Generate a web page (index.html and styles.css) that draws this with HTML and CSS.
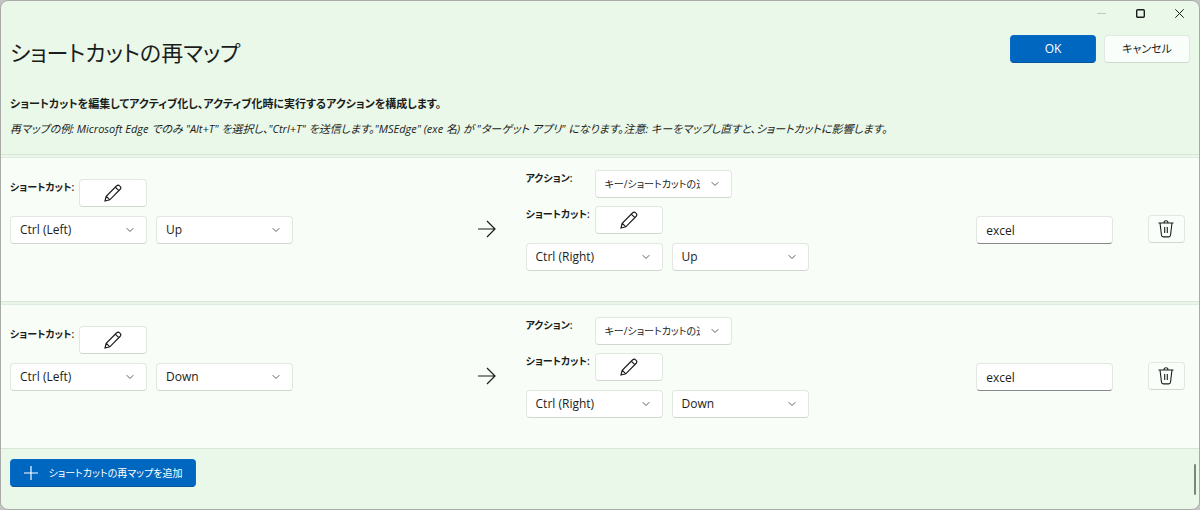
FILE: index.html
```html
<!DOCTYPE html>
<html lang="ja">
<head>
<meta charset="utf-8">
<title>ショートカットの再マップ</title>
<link rel="stylesheet" href="styles.css">
</head>
<body>
<svg class="defs" aria-hidden="true">
  <symbol id="chevron" viewBox="0 0 8 8"><path d="M0.7 2.2 4 5.5 7.3 2.2"/></symbol>
  <symbol id="pencil" viewBox="0 0 18 18"><path d="M1 17 2.2 12.2 12.7 1.8a2 2 0 0 1 2.9 0l.6.6a2 2 0 0 1 0 2.9L5.8 15.8zM11.3 3.2l3.5 3.5M2.2 12.2l3.6 3.6"/></symbol>
  <symbol id="arrow" viewBox="0 0 18 18"><path d="M0 9h17M9 1l8 8-8 8"/></symbol>
  <symbol id="trash" viewBox="0 0 16 18"><path d="M.5 3h15M2 3l1.5 12.3a1.8 1.8 0 0 0 1.8 1.6h5.4a1.8 1.8 0 0 0 1.8-1.6L14 3M6 2.8a2 2 0 0 1 4 0M6.7 7v6M9.3 7v6"/></symbol>
</svg>
<div class="window">
  <div class="titlebar">
    <button class="caption caption-off" aria-label="最小化" disabled><svg viewBox="0 0 9 9"><path d="M0 4.5h9"/></svg></button>
    <button class="caption caption-max" aria-label="最大化"><svg viewBox="0 0 9 9"><rect x=".7" y=".7" width="7.6" height="7.6" rx="1"/></svg></button>
    <button class="caption" aria-label="閉じる"><svg viewBox="0 0 9 9"><path d="M.3.3l8.4 8.4M8.7.3.3 8.7"/></svg></button>
  </div>
  <header class="header">
    <h1>ショートカットの再マップ</h1>
    <div class="actions">
      <button class="btn primary">OK</button>
      <button class="btn cancel">キャンセル</button>
    </div>
  </header>
  <div class="intro">
    <p class="lead">ショートカットを編集してアクティブ化し、アクティブ化時に実行するアクションを構成します。</p>
    <p class="example">再マップの例: Microsoft Edge でのみ "Alt+T" を選択し、"Ctrl+T" を送信します。"MSEdge" (exe 名) が "ターゲット アプリ" になります。注意: キーをマップし直すと、ショートカットに影響します。</p>
  </div>
  <main>
    <section class="row">
      <div class="source">
        <div class="field"><span class="label">ショートカット:</span><button class="btn edit" aria-label="編集"><svg><use href="#pencil"/></svg></button></div>
        <div class="keys">
          <span class="combo"><select aria-label="キー 1"><option>Ctrl (Left)</option></select><svg><use href="#chevron"/></svg></span>
          <span class="combo"><select aria-label="キー 2"><option>Up</option></select><svg><use href="#chevron"/></svg></span>
        </div>
      </div>
      <svg class="arrow" aria-hidden="true"><use href="#arrow"/></svg>
      <div class="target">
        <div class="field"><label class="label" for="action1">アクション:</label><span class="combo"><select id="action1" class="action"><option>キー/ショートカットの送信</option></select><svg><use href="#chevron"/></svg></span></div>
        <div class="field"><span class="label">ショートカット:</span><button class="btn edit" aria-label="編集"><svg><use href="#pencil"/></svg></button></div>
        <div class="keys">
          <span class="combo"><select aria-label="送信キー 1"><option>Ctrl (Right)</option></select><svg><use href="#chevron"/></svg></span>
          <span class="combo"><select aria-label="送信キー 2"><option>Up</option></select><svg><use href="#chevron"/></svg></span>
        </div>
      </div>
      <input class="app" type="text" value="excel" aria-label="ターゲット アプリ">
      <button class="btn delete" aria-label="削除"><svg><use href="#trash"/></svg></button>
    </section>
    <section class="row">
      <div class="source">
        <div class="field"><span class="label">ショートカット:</span><button class="btn edit" aria-label="編集"><svg><use href="#pencil"/></svg></button></div>
        <div class="keys">
          <span class="combo"><select aria-label="キー 1"><option>Ctrl (Left)</option></select><svg><use href="#chevron"/></svg></span>
          <span class="combo"><select aria-label="キー 2"><option>Down</option></select><svg><use href="#chevron"/></svg></span>
        </div>
      </div>
      <svg class="arrow" aria-hidden="true"><use href="#arrow"/></svg>
      <div class="target">
        <div class="field"><label class="label" for="action2">アクション:</label><span class="combo"><select id="action2" class="action"><option>キー/ショートカットの送信</option></select><svg><use href="#chevron"/></svg></span></div>
        <div class="field"><span class="label">ショートカット:</span><button class="btn edit" aria-label="編集"><svg><use href="#pencil"/></svg></button></div>
        <div class="keys">
          <span class="combo"><select aria-label="送信キー 1"><option>Ctrl (Right)</option></select><svg><use href="#chevron"/></svg></span>
          <span class="combo"><select aria-label="送信キー 2"><option>Down</option></select><svg><use href="#chevron"/></svg></span>
        </div>
      </div>
      <input class="app" type="text" value="excel" aria-label="ターゲット アプリ">
      <button class="btn delete" aria-label="削除"><svg><use href="#trash"/></svg></button>
    </section>
  </main>
  <footer>
    <button class="btn primary add"><svg viewBox="0 0 14 14"><path d="M7 0v14M0 7h14"/></svg>ショートカットの再マップを追加</button>
    <span class="scroll-thumb"></span>
  </footer>
</div>
</body>
</html>
```
FILE: styles.css
```css
* { box-sizing: border-box; }

body {
  margin: 0;
  background: #c4c4c4;
  color: #1b1d1b;
  font: 12px/16px "Open Sans", "Noto Sans CJK JP", sans-serif;
  font-feature-settings: "palt";
}

button, input, select {
  font: inherit;
  font-feature-settings: inherit;
  color: inherit;
  margin: 0;
}

svg { display: block; flex: none; fill: none; stroke: currentColor; }
.defs { position: absolute; width: 0; height: 0; }
h1, p { margin: 0; font-weight: 400; }

.window {
  display: flex;
  flex-direction: column;
  min-height: 100vh;
  border: 1px solid #a9aba9;
  border-radius: 8px;
  background: #eaf8ea;
  overflow: hidden;
}

.titlebar {
  display: flex;
  justify-content: flex-end;
  height: 24px;
}

.caption {
  display: grid;
  place-items: center;
  width: 39px;
  padding: 0;
  border: 0;
  background: none;
}

.caption svg { width: 9px; height: 9px; }
.caption-off { color: #bccabc; }
.caption-max { stroke-width: 1.4; }

.header {
  display: flex;
  justify-content: space-between;
  align-items: flex-start;
  padding: 10px 9px 0;
}

h1 { font-size: 22px; line-height: 34px; }

.actions { display: flex; gap: 8px; }

.btn {
  display: flex;
  align-items: center;
  justify-content: center;
  height: 28px;
  padding: 0;
  border: 1px solid #dfe9df;
  border-bottom-color: #d0d8d0;
  border-radius: 4px;
  background: #fafefa;
  white-space: nowrap;
}

.actions .btn { width: 86px; }
.btn.cancel { font-size: 11px; }

.btn.primary {
  border-color: #0a6cc6;
  border-bottom-color: #0555a2;
  background: #0067c0;
  color: #fff;
}

.intro { padding: 27px 9px 17px; font-size: 11px; }
.lead { font-weight: 600; }
.example { margin-top: 9px; font-style: italic; }

.row {
  display: grid;
  grid-template-columns: 468fr 48fr 451fr 172fr 37px;
  padding: 12px 14px 29px 9px;
  border-top: 1px solid #d8e8d8;
  background: #f8fdf8;
  box-shadow: inset 0 2px #eaf6ea, inset 0 3px #deecde;
}

.row:last-child { border-bottom: 1px solid #d8e6d8; }

.source { padding-top: 12px; }

.field {
  display: flex;
  align-items: flex-start;
  gap: 6px;
}

.label {
  width: 63px;
  font-size: 10px;
  font-weight: 600;
  white-space: nowrap;
}

.edit { width: 68px; background: #fff; }
.edit svg { width: 18px; height: 18px; stroke-width: 1.2; }

.keys { display: flex; gap: 9px; margin-top: 9px; }
.target .field { margin-top: 3px; }
.target .field + .field { margin-top: 8px; }

.combo { display: grid; grid-template-columns: 137px; align-items: center; }

.combo select, .combo svg { grid-area: 1 / 1; }

.combo select {
  appearance: none;
  height: 28px;
  padding: 0 31px 0 9px;
  border: 1px solid #e0e8e0;
  border-bottom-color: #d0d6d0;
  border-radius: 4px;
  background: #fff;
}

.combo .action { font-size: 10px; }

.combo svg {
  justify-self: end;
  width: 8px;
  height: 8px;
  margin-right: 13px;
  color: #5c605c;
  pointer-events: none;
}

.arrow { width: 18px; height: 18px; margin-top: 53px; stroke-width: 1.2; }

.app {
  width: 137px;
  height: 28px;
  margin-top: 49px;
  padding: 0 9px;
  border: 1px solid #e0e8e0;
  border-bottom: 1px solid #858985;
  border-radius: 4px;
  background: #fff;
}

.delete { margin-top: 48px; }
.delete svg { width: 16px; height: 18px; stroke-width: 1.1; }

.target { padding-bottom: 1px; }

footer {
  display: flex;
  flex: 1;
  justify-content: space-between;
  align-items: flex-start;
  padding: 10px 3px 10px 9px;
}

.btn.add { gap: 11px; width: 186px; font-size: 10px; }
.add svg { width: 14px; height: 14px; stroke-width: 1.2; }

.scroll-thumb {
  width: 2px;
  height: 31px;
  margin-top: 5px;
  border-radius: 1px;
  background: #7e857e;
}
```
